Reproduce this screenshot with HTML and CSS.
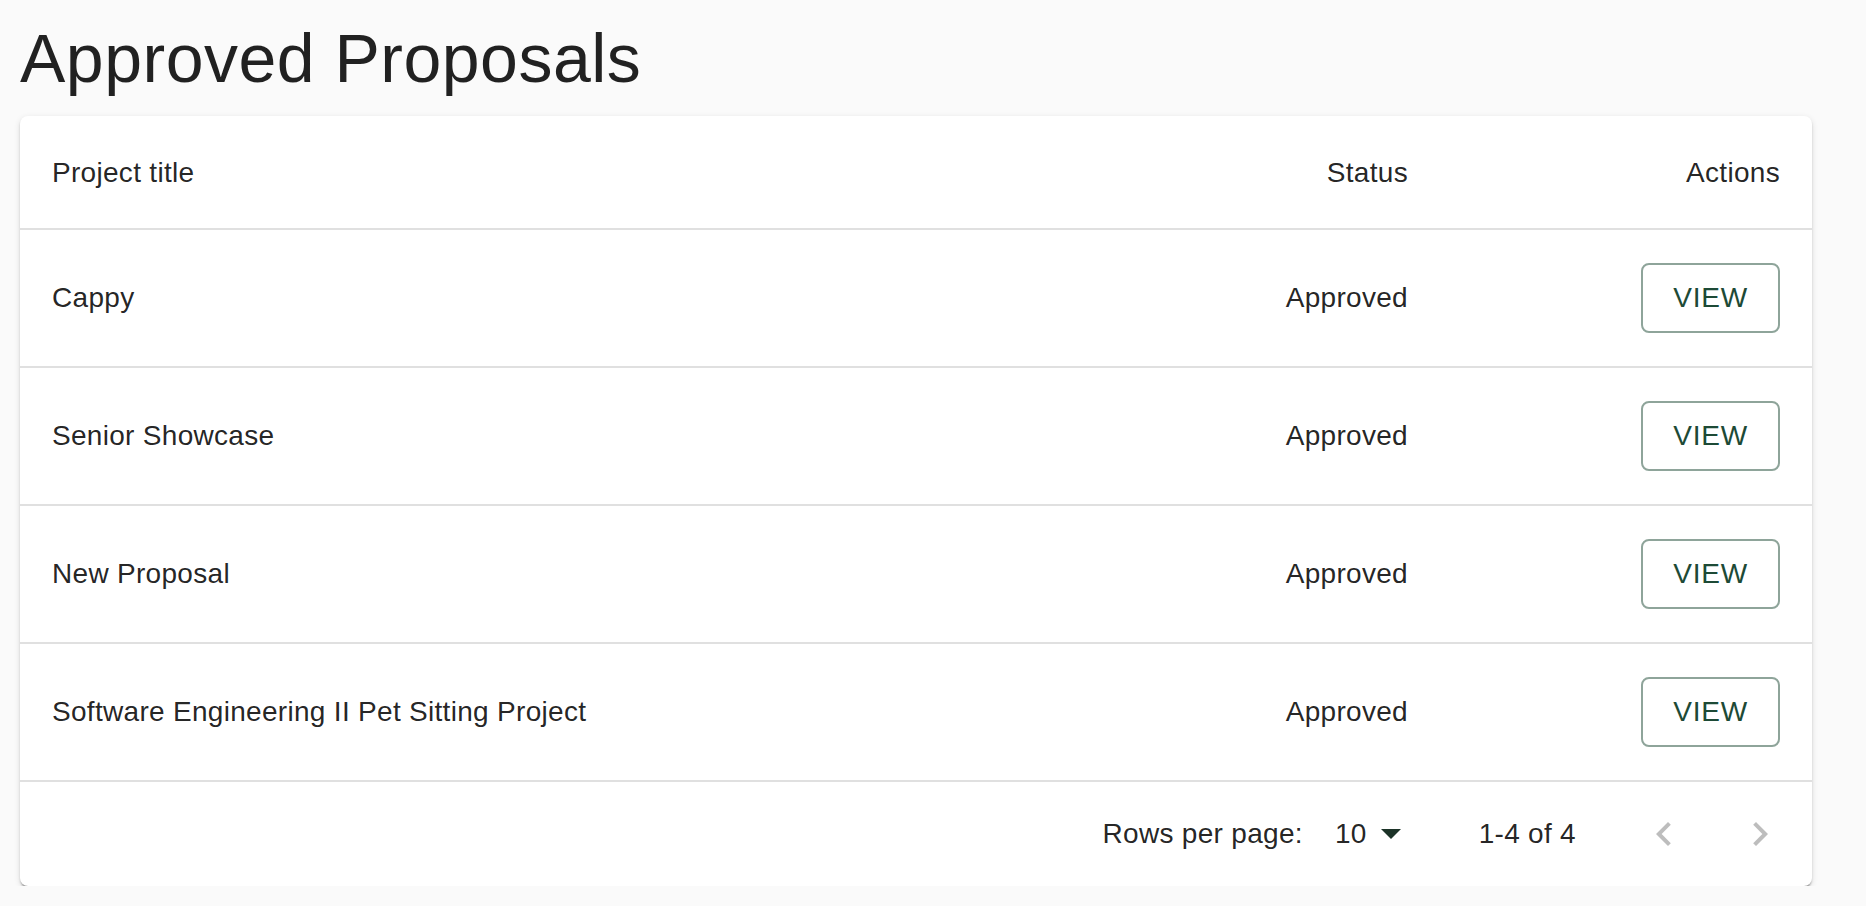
FILE: index.html
```html
<!DOCTYPE html>
<html lang="en">
<head>
<meta charset="utf-8">
<title>Approved Proposals</title>
<link rel="stylesheet" href="styles.css">
</head>
<body>
<main class="page">
  <h1 class="page-title">Approved Proposals</h1>
  <section class="card">
    <table class="proposals">
      <colgroup>
        <col>
        <col class="col-status">
        <col class="col-actions">
      </colgroup>
      <thead>
        <tr>
          <th class="cell cell-head cell-left">Project title</th>
          <th class="cell cell-head cell-right">Status</th>
          <th class="cell cell-head cell-right">Actions</th>
        </tr>
      </thead>
      <tbody>
        <tr>
          <td class="cell cell-body cell-left">Cappy</td>
          <td class="cell cell-body cell-right">Approved</td>
          <td class="cell cell-body cell-right"><button class="btn-view" type="button">View</button></td>
        </tr>
        <tr>
          <td class="cell cell-body cell-left">Senior Showcase</td>
          <td class="cell cell-body cell-right">Approved</td>
          <td class="cell cell-body cell-right"><button class="btn-view" type="button">View</button></td>
        </tr>
        <tr>
          <td class="cell cell-body cell-left">New Proposal</td>
          <td class="cell cell-body cell-right">Approved</td>
          <td class="cell cell-body cell-right"><button class="btn-view" type="button">View</button></td>
        </tr>
        <tr>
          <td class="cell cell-body cell-left">Software Engineering II Pet Sitting Project</td>
          <td class="cell cell-body cell-right">Approved</td>
          <td class="cell cell-body cell-right"><button class="btn-view" type="button">View</button></td>
        </tr>
      </tbody>
    </table>
    <div class="pagination">
      <span class="pg-caption">Rows per page:</span>
      <div class="pg-select">
        <span class="pg-select-value">10</span>
        <svg class="pg-select-icon" viewBox="0 0 24 24" width="48" height="48" aria-hidden="true"><path d="M7 10l5 5 5-5z"/></svg>
      </div>
      <span class="pg-caption">1-4 of 4</span>
      <div class="pg-actions">
        <button class="pg-btn" type="button" disabled aria-label="Previous page">
          <svg viewBox="0 0 24 24" width="48" height="48" aria-hidden="true"><path d="M15.41 16.59 10.83 12l4.58-4.59L14 6l-6 6 6 6 1.41-1.41z"/></svg>
        </button>
        <button class="pg-btn" type="button" disabled aria-label="Next page">
          <svg viewBox="0 0 24 24" width="48" height="48" aria-hidden="true"><path d="M8.59 16.59 13.17 12 8.59 7.41 10 6l6 6-6 6-1.41-1.41z"/></svg>
        </button>
      </div>
    </div>
  </section>
</main>
</body>
</html>
```

FILE: styles.css
```css
html, body {
  margin: 0;
  padding: 0;
  background: #fafafa;
}

body {
  font-family: "Liberation Sans", Arial, Helvetica, sans-serif;
  color: rgba(0, 0, 0, 0.87);
}

.page {
  padding: 16px 54px 0 20px;
}

.page-title {
  margin: 0 0 16px 0;
  font-size: 68px;
  line-height: 84px;
  font-weight: 400;
  letter-spacing: 0.5px;
}

.card {
  background: #fff;
  border-radius: 8px;
  box-shadow: 0 4px 2px -2px rgba(0, 0, 0, 0.28),
              0 2px 2px 0 rgba(0, 0, 0, 0.16),
              0 2px 6px 0 rgba(0, 0, 0, 0.12);
  overflow: hidden;
}

.proposals {
  width: 100%;
  border-collapse: collapse;
  border-spacing: 0;
  table-layout: fixed;
}

.col-status {
  width: 300px;
}

.col-actions {
  width: 372px;
}

.cell {
  padding: 32px;
  font-size: 28px;
  line-height: 48px;
  font-weight: 400;
  letter-spacing: 0.3px;
  border-bottom: 2px solid #e0e0e0;
  vertical-align: middle;
  color: rgba(0, 0, 0, 0.87);
}

.cell-head {
  padding-top: 33px;
  padding-bottom: 31px;
}

.cell-body {
  padding-top: 33px;
  padding-bottom: 33px;
  height: 70px;
}

.cell-left {
  text-align: left;
}

.cell-right {
  text-align: right;
}

.btn-view {
  display: inline-flex;
  align-items: center;
  justify-content: center;
  box-sizing: border-box;
  height: 70px;
  padding: 0 30px;
  min-width: 128px;
  border: 2px solid rgba(29, 74, 54, 0.5);
  border-radius: 8px;
  background: transparent;
  color: #1d4a36;
  font-family: "Liberation Sans", Arial, Helvetica, sans-serif;
  font-size: 28px;
  line-height: 1;
  letter-spacing: 0.8px;
  text-transform: uppercase;
  vertical-align: middle;
  cursor: pointer;
}

.pagination {
  display: flex;
  align-items: center;
  justify-content: flex-end;
  height: 104px;
  padding-right: 4px;
}

.pg-caption {
  font-size: 28px;
  line-height: 48px;
  letter-spacing: 0.3px;
}

.pg-select {
  position: relative;
  display: flex;
  align-items: center;
  margin: 0 64px 0 16px;
  padding: 0 48px 0 16px;
  font-size: 28px;
  line-height: 48px;
}

.pg-select-value {
  letter-spacing: 0.3px;
}

.pg-select-icon {
  position: absolute;
  right: 0;
  top: 50%;
  margin-top: -25px;
  fill: #1c3328;
}

.pg-actions {
  display: flex;
  margin-left: 40px;
}

.pg-btn {
  display: flex;
  align-items: center;
  justify-content: center;
  padding: 24px;
  border: 0;
  border-radius: 50%;
  background: transparent;
}

.pg-btn svg {
  fill: rgba(0, 0, 0, 0.26);
}
```
